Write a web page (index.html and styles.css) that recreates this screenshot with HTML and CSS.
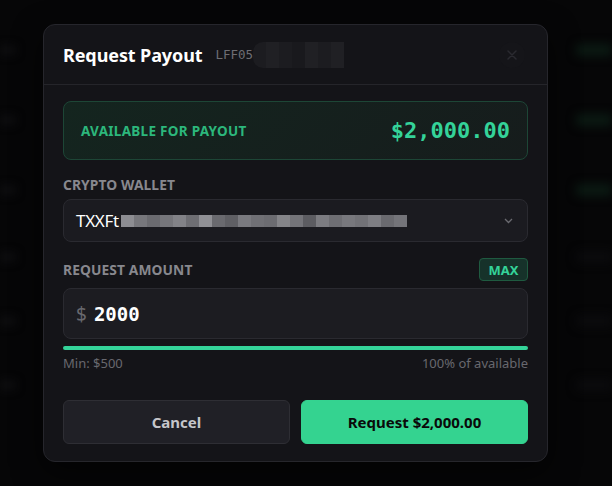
FILE: index.html
```html
<!DOCTYPE html>
<html>
<head>
<meta charset="utf-8">
<link rel="stylesheet" href="styles.css">
</head>
<body>
<div class="backdrop">
  <div class="bg-row"><span class="bg-l"></span><span class="bg-r"></span></div>
  <div class="bg-row"><span class="bg-l"></span><span class="bg-r"></span></div>
  <div class="bg-row"><span class="bg-l"></span><span class="bg-r"></span></div>
  <div class="bg-row dim"><span class="bg-l"></span><span class="bg-r grey"></span></div>
  <div class="bg-row dim"><span class="bg-l"></span><span class="bg-r grey"></span></div>
  <div class="bg-row dim"><span class="bg-l"></span><span class="bg-r grey"></span></div>
</div>

<div class="modal">
  <div class="modal-header">
    <h1 class="title">Request Payout</h1>
    <span class="ref-id">LFF05</span>
    <span class="mosaic-id">
      <i class="m1"></i><i class="m2"></i><i class="m1"></i><i class="m3"></i><i class="m2"></i><i class="m1"></i><i class="m2"></i>
    </span>
    <button class="close" aria-label="Close">
      <svg width="10" height="10" viewBox="0 0 10 10"><path d="M1 1L9 9M9 1L1 9" stroke="#2a2a30" stroke-width="1.5" stroke-linecap="round"/></svg>
    </button>
  </div>

  <div class="modal-body">
    <div class="available">
      <span class="available-label">AVAILABLE FOR PAYOUT</span>
      <span class="available-amount">$2,000.00</span>
    </div>

    <div class="field">
      <div class="field-label">CRYPTO WALLET</div>
      <div class="select">
        <span class="wallet">TXXFt</span>
        <span class="mosaic">
          <i style="background:#8d8d92"></i><i style="background:#77777c"></i><i style="background:#6b6b70"></i><i style="background:#76767b"></i><i style="background:#828287"></i><i style="background:#6e6e73"></i><i style="background:#909095"></i><i style="background:#6a6a6f"></i><i style="background:#5f5f64"></i><i style="background:#7a7a7f"></i><i style="background:#707075"></i><i style="background:#6c6c71"></i><i style="background:#858589"></i><i style="background:#747479"></i><i style="background:#5c5c61"></i><i style="background:#7c7c81"></i><i style="background:#6e6e73"></i><i style="background:#78787d"></i><i style="background:#727277"></i><i style="background:#7e7e83"></i><i style="background:#6a6a6f"></i><i style="background:#747479"></i>
        </span>
        <svg class="chevron" width="9" height="6" viewBox="0 0 9 6"><path d="M1 1L4.5 4.5L8 1" fill="none" stroke="#6a6a70" stroke-width="1.3"/></svg>
      </div>
    </div>

    <div class="field amount-field">
      <div class="label-row">
        <div class="field-label">REQUEST AMOUNT</div>
        <button class="max">MAX</button>
      </div>
      <div class="amount-input">
        <span class="currency">$</span>
        <span class="amount-value">2000</span>
      </div>
      <div class="progress"><div class="progress-fill" style="width:100%"></div></div>
      <div class="hint-row">
        <span>Min: $500</span>
        <span>100% of available</span>
      </div>
    </div>

    <div class="actions">
      <button class="btn btn-cancel">Cancel</button>
      <button class="btn btn-primary">Request $2,000.00</button>
    </div>
  </div>
</div>
</body>
</html>
```
FILE: styles.css
```css
* { box-sizing: border-box; }
html, body { margin: 0; padding: 0; }
body {
  width: 612px;
  height: 486px;
  background: #060607;
  font-family: "Noto Sans", "Open Sans", sans-serif;
  overflow: hidden;
  position: relative;
}

.backdrop {
  display: flex;
  flex-direction: column;
  padding-top: 40px;
  gap: 50px;
  filter: blur(5px);
}
.bg-row {
  height: 20px;
  display: flex;
  justify-content: space-between;
  align-items: center;
}
.bg-row.dim { height: 14px; }
.bg-l { width: 16px; height: 8px; background: #111113; border-radius: 4px; }
.bg-r { width: 36px; height: 12px; background: #0b1a13; border-radius: 4px; }
.bg-r.grey { background: #0b0b0d; }

.modal {
  position: absolute;
  left: 43px;
  top: 24px;
  width: 505px;
  background: #141418;
  border: 1px solid #26262c;
  border-radius: 12px;
  box-shadow: 0 10px 30px rgba(0,0,0,0.6);
}

.modal-header {
  height: 60px;
  display: flex;
  align-items: center;
  padding: 0 19px;
  border-bottom: 1px solid #25252a;
}
.title {
  margin: 0;
  font-size: 18px;
  font-weight: 700;
  color: #ffffff;
  letter-spacing: -0.1px;
}
.ref-id {
  margin-left: 13px;
  font-family: "DejaVu Sans Mono", monospace;
  font-size: 12.5px;
  color: #6e6e74;
}
.mosaic-id {
  display: flex;
  height: 26px;
  border-radius: 10px 0 0 10px;
  overflow: hidden;
}
.mosaic-id i { display: block; width: 13px; height: 26px; }
.mosaic-id .m1 { background: #1c1c20; }
.mosaic-id .m2 { background: #202024; }
.mosaic-id .m3 { background: #19191d; }
.close {
  margin-left: auto;
  width: 26px;
  height: 26px;
  border: none;
  border-radius: 50%;
  background: #151519;
  display: flex;
  align-items: center;
  justify-content: center;
  padding: 0;
  margin-right: 3px;
}

.modal-body {
  padding: 16px 19px 17px;
  display: flex;
  flex-direction: column;
}

.available {
  height: 59px;
  border: 1px solid #1d4636;
  border-radius: 8px;
  background: linear-gradient(135deg, #14251f 0%, #161c1c 100%);
  display: flex;
  align-items: center;
  justify-content: space-between;
  padding: 0 17px 0 17px;
}
.available-label {
  font-size: 13.5px;
  font-weight: 700;
  color: #2cb77c;
  letter-spacing: 0.3px;
}
.available-amount {
  font-family: "DejaVu Sans Mono", monospace;
  font-size: 22px;
  font-weight: 700;
  color: #34d399;
}

.field { margin-top: 17px; display: flex; flex-direction: column; }
.field-label {
  font-size: 13.8px;
  font-weight: 700;
  color: #88888e;
  line-height: 16px;
  letter-spacing: 0.1px;
}
.select {
  margin-top: 6px;
  height: 43px;
  background: #1b1b20;
  border: 1px solid #2a2a30;
  border-radius: 8px;
  display: flex;
  align-items: center;
  padding: 0 14px 0 12px;
}
.wallet {
  font-size: 17px;
  color: #ffffff;
  letter-spacing: -0.3px;
  margin-right: 2px;
}
.mosaic { display: flex; height: 12px; }
.mosaic i { display: block; width: 13px; height: 12px; }
.chevron { margin-left: auto; }

.amount-field { margin-top: 16px; }
.label-row {
  display: flex;
  justify-content: space-between;
  align-items: center;
}
.max {
  height: 23px;
  width: 49px;
  padding: 0;
  border: 1px solid #1f5a40;
  background: #16322a;
  border-radius: 4px;
  color: #34d399;
  font-family: "Noto Sans", sans-serif;
  font-size: 13px;
  font-weight: 700;
}
.amount-input {
  margin-top: 7px;
  height: 51px;
  background: #1c1c21;
  border: 1px solid #2a2a30;
  border-radius: 8px;
  display: flex;
  align-items: center;
  padding: 0 12px;
}
.currency {
  font-size: 19px;
  color: #68686e;
  margin-right: 7px;
}
.amount-value {
  font-family: "DejaVu Sans Mono", monospace;
  font-size: 19px;
  font-weight: 700;
  color: #ffffff;
}
.progress {
  margin-top: 7px;
  height: 4px;
  border-radius: 2px;
  background: #26262c;
  overflow: hidden;
}
.progress-fill { height: 100%; background: #34d399; }
.hint-row {
  margin-top: 4px;
  display: flex;
  justify-content: space-between;
  font-size: 13px;
  line-height: 18px;
  color: #68686e;
}

.actions {
  margin-top: 28px;
  display: flex;
  gap: 11px;
}
.btn {
  flex: 1;
  height: 44px;
  border-radius: 6px;
  font-family: "Noto Sans", sans-serif;
  font-size: 15px;
  font-weight: 700;
  padding: 0;
}
.btn-cancel {
  background: #202026;
  border: 1px solid #2e2e34;
  color: #c6c6ca;
}
.btn-primary {
  background: #34d390;
  border: 1px solid #34d390;
  color: #0a0a0a;
}
```
